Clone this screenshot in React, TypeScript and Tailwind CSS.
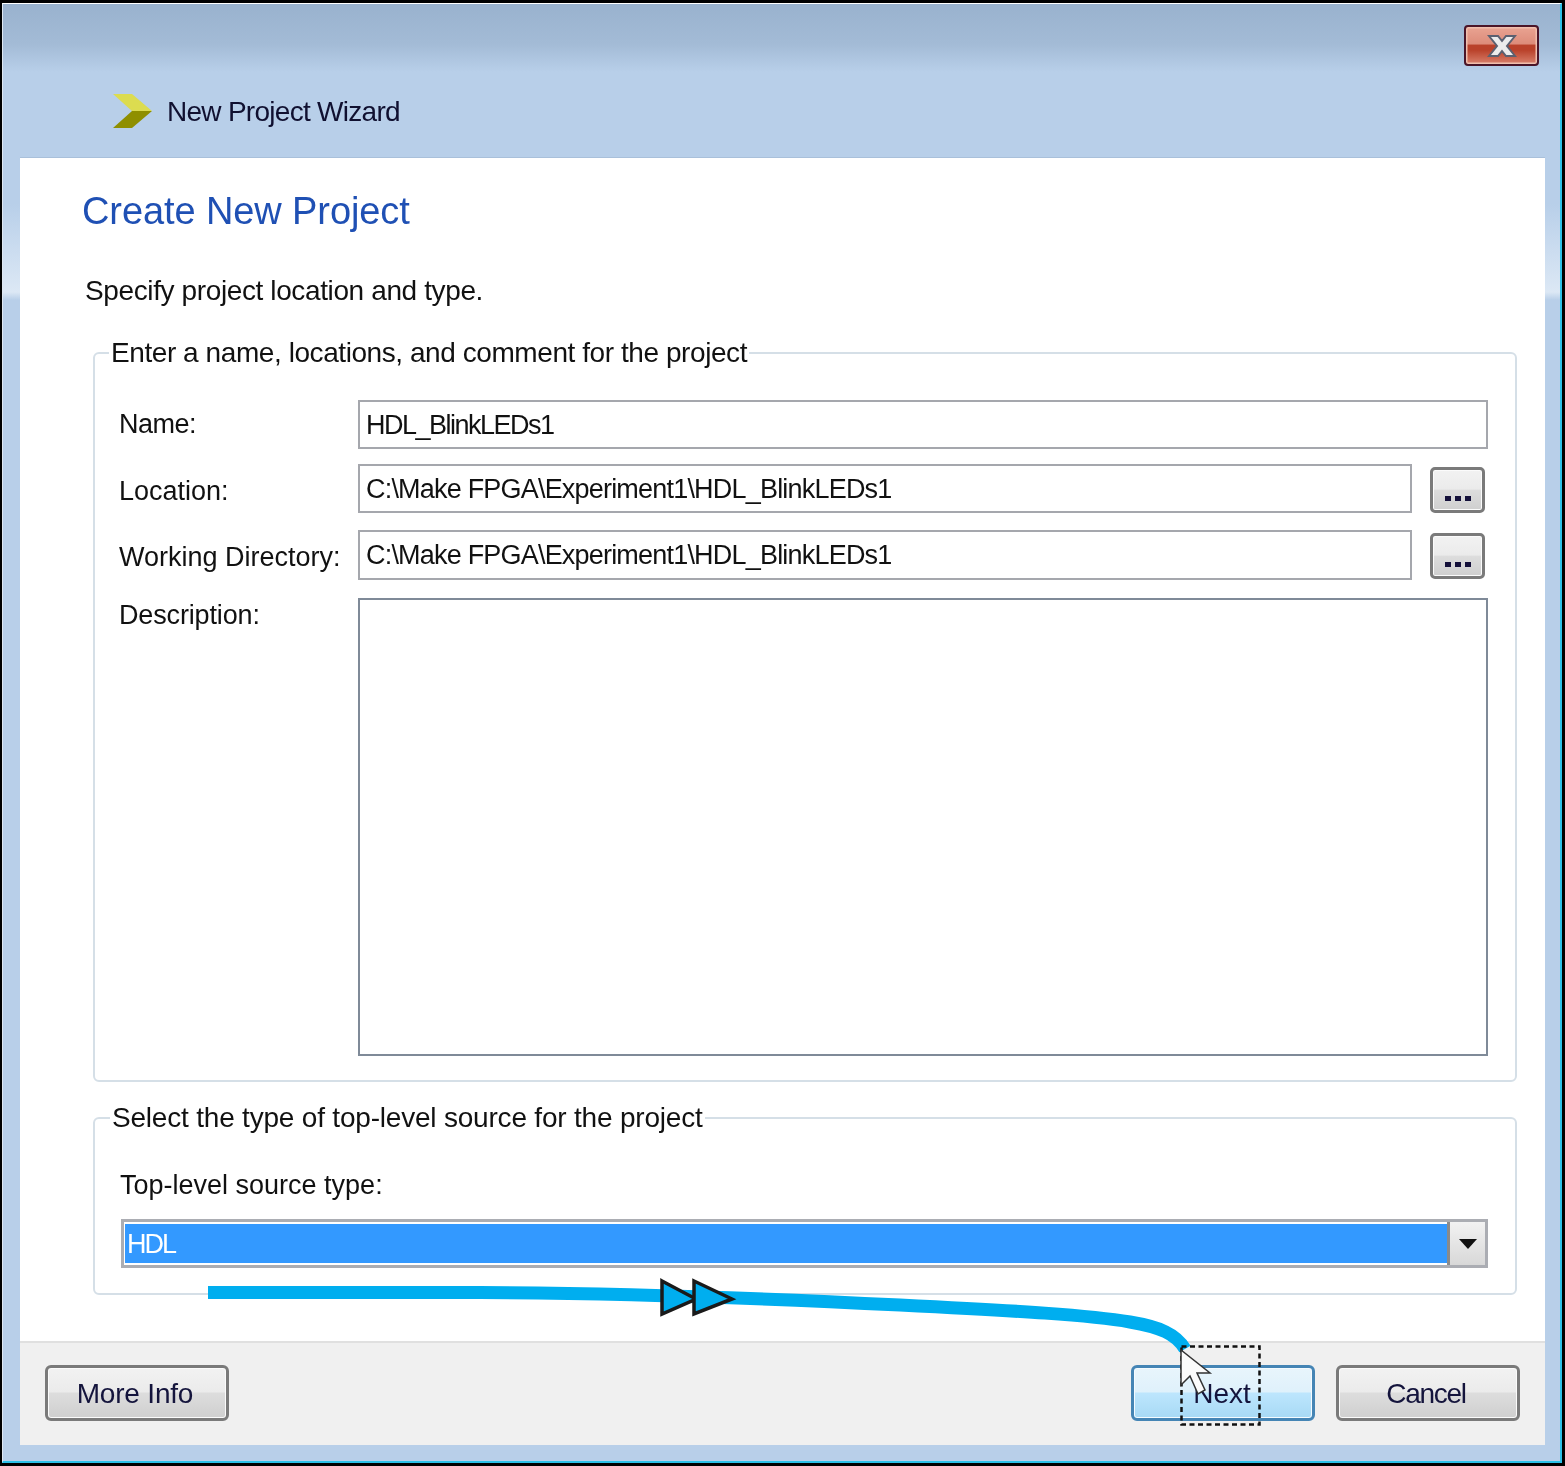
import React from "react";

const font = "font-['Liberation_Sans',Arial,sans-serif]";

function Btn({ label, primary, tracking }: { label: string; primary?: boolean; tracking: string }) {
  return (
    <div
      className={
        primary
          ? `w-[184px] h-[56px] rounded-[6px] border-[3px] border-[#4585b5] shadow-[inset_0_0_0_1px_#f4fbff] bg-[linear-gradient(#e8f5fc_0%,#dff1fb_48%,#bde6fd_50%,#a7d9f5_100%)] flex items-center justify-center text-[28px] text-[#14143c] pt-[2px] pr-[2px] ${tracking}`
          : `w-[184px] h-[56px] rounded-[6px] border-[3px] border-[#7a7a7a] shadow-[inset_0_0_0_1px_#fbfbfb] bg-[linear-gradient(#f2f2f2_0%,#ebebeb_48%,#dddddd_50%,#cfcfcf_100%)] flex items-center justify-center text-[28px] text-[#14143c] pt-[2px] pr-[4px] ${tracking}`
      }
    >
      {label}
    </div>
  );
}

function Dots() {
  return (
    <div className="w-[55px] h-[46px] mr-[3px] mt-[3px] rounded-[5px] border-[3px] border-[#7a7a7a] shadow-[inset_0_0_0_1px_#fbfbfb] bg-[linear-gradient(#f2f2f2_0%,#ebebeb_48%,#dddddd_50%,#cfcfcf_100%)] flex items-end justify-center gap-[4px] pb-[9px]">
      <span className="w-[6px] h-[5px] bg-[#14103a]" />
      <span className="w-[6px] h-[5px] bg-[#14103a]" />
      <span className="w-[6px] h-[5px] bg-[#14103a]" />
    </div>
  );
}

function Field({ value, className }: { value: string; className: string }) {
  return (
    <div className={`border-[2px] border-[#a5a7ad] bg-white pl-[6px] text-[27px] leading-[46px] text-[#111] whitespace-nowrap ${className}`}>
      {value}
    </div>
  );
}

export default function App() {
  return (
    <div className={`${font} w-[1565px] h-[1466px] bg-black pl-[2px] pr-[3px] pt-[3px] pb-[3px] overflow-hidden relative`}>
      <div className="h-full flex flex-col blur-[0.5px] border-t-[1px] border-t-white border-l-[1px] border-l-[#dfe8f2] border-r-[2px] border-r-[#2cc0e8] border-b-[2px] border-b-[#2cc0e8] bg-[linear-gradient(#99b2ce_0px,#a3bbd6_40px,#b8cfe9_68px,#b8cfe9_200px,#dce8f5_288px,#b8cfe9_296px,#b8cfe9_100%)] pl-[17px] pr-[15px] pb-[16px]">
        {/* Title bar */}
        <header className="h-[153px] shrink-0 relative">
          <div className="flex justify-end pt-[21px] pr-[6px]">
            <div className="w-[75px] h-[41px] rounded-[4px] border-[2px] border-[#4a1528] shadow-[inset_0_0_0_1.5px_#f0bfae] bg-[linear-gradient(#e9a392_0%,#dd8c7a_45%,#b9412a_50%,#b9412a_62%,#d9806c_100%)] flex items-center justify-center">
              <svg width="30" height="24" viewBox="0 0 30 24">
                <polygon
                  points="2,2 11,2 15,7 19,2 28,2 20,12 28,22 19,22 15,17 11,22 2,22 10,12"
                  fill="#ececec"
                  stroke="#5b6070"
                  strokeWidth="2"
                />
              </svg>
            </div>
          </div>
          <div className="flex items-center pl-[92px] mt-[18px] h-[56px]">
            <svg width="40" height="36" viewBox="0 0 40 36" className="shrink-0 -mt-[2px]">
              <polygon points="1,1 20,1 40,18 20,18" fill="#dcdc50" />
              <polygon points="1,35 20,35 40,18 20,18" fill="#8f8f00" />
            </svg>
            <span className="ml-[15px] text-[28px] tracking-[-0.72px] text-[#101030] whitespace-nowrap">New Project Wizard</span>
          </div>
        </header>

        {/* Panel */}
        <main className="flex-1 flex flex-col bg-white min-h-0 border-t-[1px] border-t-[#a9c0da]">
          <section className="flex-1 min-h-0 flex flex-col pl-[73px] pr-[28px]">
            <h1 className="text-[38px] leading-[46px] font-normal tracking-[-0.1px] text-[#1f50b4] mt-[30px] -ml-[11px] whitespace-nowrap">Create New Project</h1>
            <p className="text-[28px] leading-[34px] tracking-[-0.38px] text-[#111] mt-[40px] -ml-[8px] whitespace-nowrap">Specify project location and type.</p>

            <fieldset className="mt-[28px] border-[2px] border-[#d5dfe7] rounded-[6px] pl-[24px] pr-[27px] pb-[24px]">
              <legend className="-ml-[10px] px-[2px] text-[28px] leading-[34px] tracking-[-0.43px] text-[#111] whitespace-nowrap">Enter a name, locations, and comment for the project</legend>
              <div className="flex flex-col pt-[30px]">
                <div className="flex h-[49px]">
                  <label className="w-[239px] shrink-0 text-[27px] leading-[49px] tracking-[-0.5px] text-[#111]">Name:</label>
                  <Field value="HDL_BlinkLEDs1" className="flex-1 tracking-[-1.5px]" />
                </div>
                <div className="flex h-[49px] mt-[15px]">
                  <label className="w-[239px] shrink-0 text-[27px] leading-[49px] pt-[3px] text-[#111]">Location:</label>
                  <Field value="C:\Make FPGA\Experiment1\HDL_BlinkLEDs1" className="flex-1 mr-[18px] tracking-[-0.8px]" />
                  <Dots />
                </div>
                <div className="flex h-[50px] mt-[17px]">
                  <label className="w-[239px] shrink-0 text-[27px] leading-[49px] pt-[3px] text-[#111] whitespace-nowrap">Working Directory:</label>
                  <Field value="C:\Make FPGA\Experiment1\HDL_BlinkLEDs1" className="flex-1 mr-[18px] tracking-[-0.8px]" />
                  <Dots />
                </div>
                <div className="flex h-[458px] mt-[18px]">
                  <label className="w-[239px] shrink-0 text-[27px] leading-[34px] tracking-[-0.15px] text-[#111]">Description:</label>
                  <div className="flex-1 border-[2px] border-[#7f8a98] bg-white" />
                </div>
              </div>
            </fieldset>

            <fieldset className="mt-[19px] border-[2px] border-[#d5dfe7] rounded-[6px] pl-[25px] pr-[27px] pb-[25px]">
              <legend className="-ml-[10px] px-[2px] text-[28px] leading-[34px] tracking-[-0.2px] text-[#111] whitespace-nowrap">Select the type of top-level source for the project</legend>
              <div className="text-[27px] leading-[34px] text-[#111] mt-[33px]">Top-level source type:</div>
              <div className="mt-[17px] ml-[1px] h-[49px] flex border-[3px] border-[#abadb3] bg-white">
                <div className="flex-1 m-[1px] mr-0 border-y-[1px] border-white bg-[#3399ff] text-white text-[27px] tracking-[-2px] leading-[40px] pl-[2px]">HDL</div>
                <div className="w-[38px] shrink-0 border-l-[3px] border-[#8a8a8a] bg-[linear-gradient(#f2f2f2,#d8d8d8)] flex items-center justify-center">
                  <svg width="18" height="10" viewBox="0 0 18 10"><polygon points="0,0 18,0 9,10" fill="#111" /></svg>
                </div>
              </div>
            </fieldset>
          </section>

          <footer className="h-[104px] shrink-0 bg-[#f0f0f0] border-t-[2px] border-[#e0e0e0] flex justify-between pl-[25px] pr-[25px] pt-[22px]">
            <Btn label="More Info" tracking="tracking-[-0.2px]" />
            <div className="flex gap-[21px]">
              <Btn label="Next" primary tracking="tracking-[0px]" />
              <Btn label="Cancel" tracking="tracking-[-1.3px]" />
            </div>
          </footer>
        </main>
      </div>

      {/* Annotation overlay */}
      <svg className="absolute left-0 top-0 pointer-events-none" width="1565" height="1466" viewBox="0 0 1565 1466">
        <path d="M208 1292.5 L480 1292.5 C600 1293 760 1298 900 1305 C1020 1311 1090 1315 1130 1322 C1160 1327 1176 1334 1185 1349" fill="none" stroke="#00aeef" strokeWidth="13" />
        <polygon points="662,1281 696,1299 662,1314" fill="#00aeef" stroke="#1a1a1a" strokeWidth="3.5" />
        <polygon points="694,1281 732,1299 694,1314" fill="#00aeef" stroke="#1a1a1a" strokeWidth="3.5" />
        <rect x="1181.5" y="1346.5" width="78" height="78" fill="none" stroke="#111" strokeWidth="2.5" strokeDasharray="5 3.5" />
        <polygon points="1181,1350 1181,1385 1190,1376 1198,1394 1205,1390 1197,1373 1210,1373" fill="#fbfbfb" stroke="#333" strokeWidth="1.5" />
      </svg>
    </div>
  );
}
